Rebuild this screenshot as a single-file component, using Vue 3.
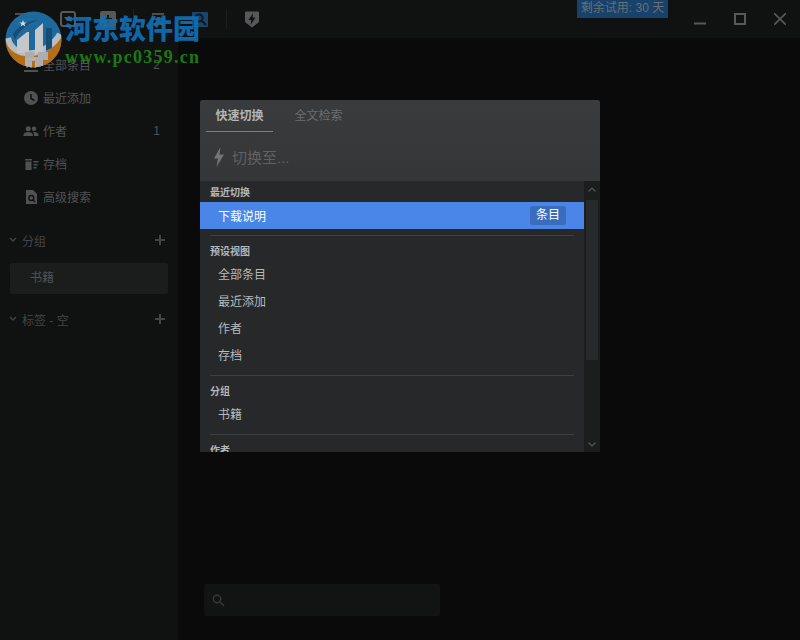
<script setup>
const navItems = [
  { label: "全部条目", count: "2", icon: "all" },
  { label: "最近添加", count: "", icon: "clock" },
  { label: "作者", count: "1", icon: "people" },
  { label: "存档", count: "", icon: "archive" },
  { label: "高级搜索", count: "", icon: "search" },
];

const presets = ["全部条目", "最近添加", "作者", "存档"];
</script>

<template>
  <div class="app">
    <header class="titlebar">
      <div class="toolbar">
        <svg class="tool-menu" width="18" height="14" viewBox="0 0 18 14">
          <path d="M0 2h18M0 7h18M0 12h18" stroke="#4b4d4e" stroke-width="2" />
        </svg>
        <svg class="tool-note" width="16" height="16" viewBox="0 0 16 16">
          <rect x="1" y="1" width="14" height="14" rx="2" fill="none" stroke="#565859" stroke-width="2" />
          <path d="M4 6h8l-2 4H7z" fill="#565859" />
        </svg>
        <svg class="tool-add" width="16" height="16" viewBox="0 0 16 16">
          <rect width="16" height="16" rx="2" fill="#565859" />
          <path d="M8 4v8M4 8h8" stroke="#141515" stroke-width="2" />
        </svg>
        <span class="tool-sep tool-sep-left"></span>
        <svg class="tool-list" width="12" height="14" viewBox="0 0 12 14">
          <path d="M0 2h12M0 7h12M0 12h12" stroke="#4b4d4e" stroke-width="2" />
        </svg>
        <div class="tool-active">
          <svg width="14" height="14" viewBox="0 0 14 14">
            <circle cx="6" cy="6" r="3.600" fill="none" stroke="#14181c" stroke-width="2" />
            <path d="M9 9l4 4" stroke="#14181c" stroke-width="2" />
          </svg>
        </div>
        <span class="tool-sep"></span>
        <svg width="14" height="18" viewBox="0 0 14 18">
          <path d="M1 1.500h12q1 0 1 1V12l-7 5.500L0 12V2.500q0-1 1-1z" fill="#565859" />
          <path d="M8 3L3.500 10H6.300L5.500 15L10.500 7.500H7.500z" fill="#111313" />
        </svg>
      </div>
      <div class="trial">剩余试用: 30 天</div>
      <div class="win-buttons">
        <svg width="12" height="12" viewBox="0 0 12 12"><path d="M0 10.500h12" stroke="#565859" stroke-width="2" /></svg>
        <svg width="12" height="12" viewBox="0 0 12 12"><rect x="1" y="1" width="10" height="10" fill="none" stroke="#565859" stroke-width="2" /></svg>
        <svg width="12" height="12" viewBox="0 0 12 12"><path d="M0 0l12 12M12 0L0 12" stroke="#565859" stroke-width="1.600" /></svg>
      </div>
    </header>

    <div class="body">
      <aside class="sidebar">
        <ul class="nav">
          <li v-for="item in navItems" :key="item.label" class="nav-item">
            <svg class="nav-icon" width="16" height="16" viewBox="0 0 16 16">
              <path v-if="item.icon === 'all'" d="M3 1h10v2H3zM3 5h2v6H3zM7 5h2v6H7zM11 5h2v6h-2zM1 13h14v2H1z" fill="#4f5152" />
              <template v-else-if="item.icon === 'clock'">
                <circle cx="8" cy="8" r="7" fill="#4f5152" />
                <path d="M8 4v4.500l3.500 2" fill="none" stroke="#101212" stroke-width="1.500" />
              </template>
              <path v-else-if="item.icon === 'people'" d="M5.200 3.200a2.500 2.500 0 1 1 0 5a2.500 2.500 0 0 1 0-5zM11 3.500a2.300 2.300 0 1 1 0 4.600a2.300 2.300 0 0 1 0-4.600zM0.500 13v-1.500C0.500 10 3 9 5.200 9s4.700 1 4.700 2.500V13zM11 13v-1.500c0-.9-.4-1.700-1-2.300c.4-.1.800-.2 1.200-.2c2 0 4.300 1 4.300 2.500V13z" fill="#4f5152" />
              <path v-else-if="item.icon === 'archive'" d="M2 3h7v1.500H2zM2.500 5.500h6V14h-6zM10.500 5h5v1.500h-5zM10.500 8h4v1.500h-4zM10.500 11h3v1.500h-3z" fill="#4f5152" />
              <template v-else>
                <path d="M3 1h7l4 4v10H3z" fill="#4f5152" />
                <circle cx="8.300" cy="9" r="2.500" fill="none" stroke="#101212" stroke-width="1.400" />
                <path d="M10 11l2 2" stroke="#101212" stroke-width="1.400" />
              </template>
            </svg>
            <span class="nav-label">{{ item.label }}</span>
            <span class="nav-count">{{ item.count }}</span>
          </li>
        </ul>

        <div class="side-head side-head-groups">
          <svg width="8" height="6" viewBox="0 0 8 6"><path d="M1 1l3 3 3-3" fill="none" stroke="#434546" stroke-width="1.300" /></svg>
          <span class="side-title">分组</span>
          <span class="side-plus"></span>
        </div>
        <div class="side-group">书籍</div>
        <div class="side-head">
          <svg width="8" height="6" viewBox="0 0 8 6"><path d="M1 1l3 3 3-3" fill="none" stroke="#434546" stroke-width="1.300" /></svg>
          <span class="side-title">标签 - 空</span>
          <span class="side-plus"></span>
        </div>
      </aside>

      <main class="main">
        <div class="searchbox">
          <svg width="13" height="13" viewBox="0 0 13 13">
            <circle cx="5" cy="5" r="3.700" fill="none" stroke="#383a3a" stroke-width="1.400" />
            <path d="M8 8l4 4" stroke="#383a3a" stroke-width="1.500" />
          </svg>
        </div>
      </main>
    </div>

    <section class="dialog">
      <div class="dialog-head">
        <div class="tabs">
          <span class="tab tab-on">快速切换</span>
          <span class="tab">全文检索</span>
        </div>
        <div class="switch-input">
          <svg width="12" height="20" viewBox="0 0 12 20">
            <path d="M7.500 0L1 11.500h4L3.500 20L11 7.500H6.500z" fill="#737576" />
          </svg>
          <span>切换至...</span>
        </div>
      </div>
      <div class="dialog-body">
        <div class="results">
          <h4 class="res-title res-title-first">最近切换</h4>
          <div class="res-row res-row-on">
            <span>下载说明</span>
            <span class="res-tag">条目</span>
          </div>
          <hr class="res-line res-line-first" />
          <h4 class="res-title">预设视图</h4>
          <div v-for="name in presets" :key="name" class="res-row">{{ name }}</div>
          <hr class="res-line" />
          <h4 class="res-title">分组</h4>
          <div class="res-row">书籍</div>
          <hr class="res-line" />
          <h4 class="res-title">作者</h4>
        </div>
        <div class="scrollbar">
          <svg width="8" height="5" viewBox="0 0 8 5"><path d="M0.500 4.500L4 1l3.500 3.500" fill="none" stroke="#555" stroke-width="1.200" /></svg>
          <div class="scroll-track"><div class="scroll-thumb"></div></div>
          <svg width="8" height="5" viewBox="0 0 8 5"><path d="M0.500 0.500L4 4l3.500-3.500" fill="none" stroke="#555" stroke-width="1.200" /></svg>
        </div>
      </div>
    </section>

    <div class="watermark">
      <svg class="wm-logo" width="58" height="58" viewBox="0 0 58 58">
        <defs>
          <clipPath id="wm-clip"><circle cx="28.500" cy="28.500" r="28" /></clipPath>
        </defs>
        <g clip-path="url(#wm-clip)">
          <rect width="58" height="58" fill="#1f70a8" />
          <path d="M0 30C10 48 42 46 58 24V58H0z" fill="#c47518" />
          <path d="M3 27C8 50 42 46 55 23" fill="none" stroke="#c9ccce" stroke-width="6" />
          <path d="M8 23C14 14 24 10 33 9C22 13 13 20 10 29z" fill="#17527c" />
          <path d="M12 29L22 21H24V42H12z" fill="#d5d7d8" />
          <path d="M30 19L38 12V42H30z" fill="#d5d7d8" />
          <path d="M41 17H47V37L41 40z" fill="#15527e" />
          <path d="M20 41H29V46H33V41H43V49H38V58H30V50H27V58H20z" fill="#b9bbbc" />
          <path d="M18 9l1 2.500h2.600l-2.100 1.600.800 2.500-2.300-1.500-2.300 1.500.800-2.500-2.100-1.600H17z" fill="#e3e5e6" />
        </g>
      </svg>
      <div class="wm-text">
        <div class="wm-name">河东软件园</div>
        <div class="wm-url">www.pc0359.cn</div>
      </div>
    </div>
  </div>
</template>

<style>
html,
body {
  margin: 0;
  background: #0a0a0a;
}
</style>

<style scoped>
.app {
  position: relative;
  width: 800px;
  height: 640px;
  overflow: hidden;
  display: flex;
  flex-direction: column;
  background: #0a0a0a;
  font-family: "Liberation Sans", "Noto Sans CJK SC", sans-serif;
  font-size: 12px;
}

.titlebar {
  flex: 0 0 38px;
  display: flex;
  background: #101212;
}

.toolbar {
  display: flex;
  align-items: center;
  height: 38px;
  padding-left: 15px;
}

.tool-menu {
  margin-right: 27px;
}

.tool-note {
  margin-right: 24px;
}

.tool-list {
  margin-right: 28px;
}

.tool-active {
  width: 16px;
  height: 15px;
  display: flex;
  align-items: center;
  justify-content: center;
  background: #17466f;
  border-radius: 1px;
}

.tool-sep {
  width: 1px;
  height: 20px;
  margin: 0 18px;
  background: #1d1f1f;
}

.tool-sep-left {
  margin-left: 17px;
}

.trial {
  align-self: flex-start;
  margin-left: 318px;
  width: 91px;
  height: 18px;
  line-height: 17px;
  text-align: center;
  background: #17426b;
  color: #6b6f72;
  font-size: 12px;
}

.win-buttons {
  display: flex;
  align-items: center;
  gap: 28px;
  margin-left: 26px;
  height: 38px;
}

.body {
  flex: 1;
  display: flex;
  min-height: 0;
}

.sidebar {
  flex: 0 0 178px;
  background: #101212;
  padding-top: 10px;
  box-sizing: border-box;
}

.nav {
  list-style: none;
  margin: 0;
  padding: 0;
}

.nav-item {
  display: flex;
  align-items: center;
  height: 33px;
  padding: 0 18px 0 23px;
  color: #505253;
}

.nav-icon {
  flex: none;
  margin-right: 4px;
}

.nav-label {
  flex: 1;
}

.side-head {
  display: flex;
  align-items: center;
  height: 24px;
  padding: 0 13px 0 9px;
  color: #434546;
}

.side-head-groups {
  margin-top: 15px;
  margin-bottom: 11px;
}

.side-title {
  flex: 1;
  margin-left: 5px;
}

.side-plus {
  width: 10px;
  height: 10px;
  background: linear-gradient(#434546, #434546) center / 100% 2px no-repeat,
    linear-gradient(#434546, #434546) center / 2px 100% no-repeat;
}

.side-group {
  height: 31px;
  line-height: 31px;
  margin: 0 10px 13px;
  padding-left: 20px;
  background: #1b1d1d;
  border-radius: 2px;
  color: #505253;
}

.main {
  flex: 1;
  display: flex;
  flex-direction: column;
  justify-content: flex-end;
  padding: 0 360px 24px 26px;
}

.searchbox {
  height: 32px;
  width: 236px;
  flex: none;
  display: flex;
  align-items: center;
  padding-left: 8px;
  box-sizing: border-box;
  background: #121313;
  border-radius: 2px;
}

.dialog {
  position: absolute;
  left: 200px;
  top: 100px;
  width: 400px;
  height: 352px;
  display: flex;
  flex-direction: column;
  border-radius: 3px 3px 0 0;
  overflow: hidden;
  background: #272829;
}

.dialog-head {
  flex: 0 0 81px;
  background: linear-gradient(#3a3b3d, #353637);
}

.tabs {
  display: flex;
  height: 32px;
  padding-left: 6px;
}

.tab {
  width: 67px;
  text-align: center;
  line-height: 32px;
  height: 32px;
  margin-right: 12px;
  box-sizing: border-box;
  color: #6b6d6f;
}

.tab-on {
  color: #b3b5b7;
  font-weight: 700;
  border-bottom: 1px solid #4a86e8;
}

.switch-input {
  display: flex;
  align-items: center;
  height: 49px;
  padding-left: 13px;
  gap: 7px;
  color: #5f6163;
  font-size: 15px;
}

.dialog-body {
  flex: 1;
  display: flex;
  min-height: 0;
}

.results {
  flex: 1;
  min-width: 0;
  overflow: hidden;
}

.res-title {
  margin: 0;
  height: 24px;
  line-height: 32px;
  padding-left: 10px;
  font-size: 10px;
  font-weight: 700;
  color: #b5b7b9;
}

.res-title-first {
  height: 21px;
  line-height: 23px;
}

.res-row {
  display: flex;
  align-items: center;
  justify-content: space-between;
  height: 27px;
  padding: 0 18px;
  color: #b8babc;
}

.res-row-on {
  background: #4a86e8;
  color: #ffffff;
}

.res-tag {
  padding: 0 6px;
  height: 19px;
  line-height: 19px;
  border-radius: 3px;
  background: #3a6cbd;
}

.res-line {
  height: 1px;
  margin: 7px 10px 0;
  border: 0;
  background: #3e4042;
}

.res-line-first {
  margin-top: 6px;
}

.scrollbar {
  flex: 0 0 16px;
  display: flex;
  flex-direction: column;
  align-items: center;
  justify-content: space-between;
  padding: 6px 0 5px;
  box-sizing: border-box;
  background: #1c1e1e;
}

.scroll-track {
  flex: 1;
  align-self: stretch;
  padding: 8px 2px 0;
}

.scroll-thumb {
  height: 160px;
  background: #27292a;
}

.watermark {
  position: absolute;
  left: 5px;
  top: 11px;
  display: flex;
  opacity: 0.92;
  pointer-events: none;
}

.wm-logo {
  flex: none;
}

.wm-text {
  margin-left: 2px;
}

.wm-name {
  font-family: "Noto Sans CJK SC", sans-serif;
  font-weight: 900;
  font-size: 27px;
  line-height: 34px;
  color: #0f6fb6;
}

.wm-url {
  font-family: "Liberation Serif", serif;
  font-weight: 700;
  font-size: 18px;
  line-height: 24px;
  letter-spacing: 1.250px;
  color: #1c8212;
}
</style>
